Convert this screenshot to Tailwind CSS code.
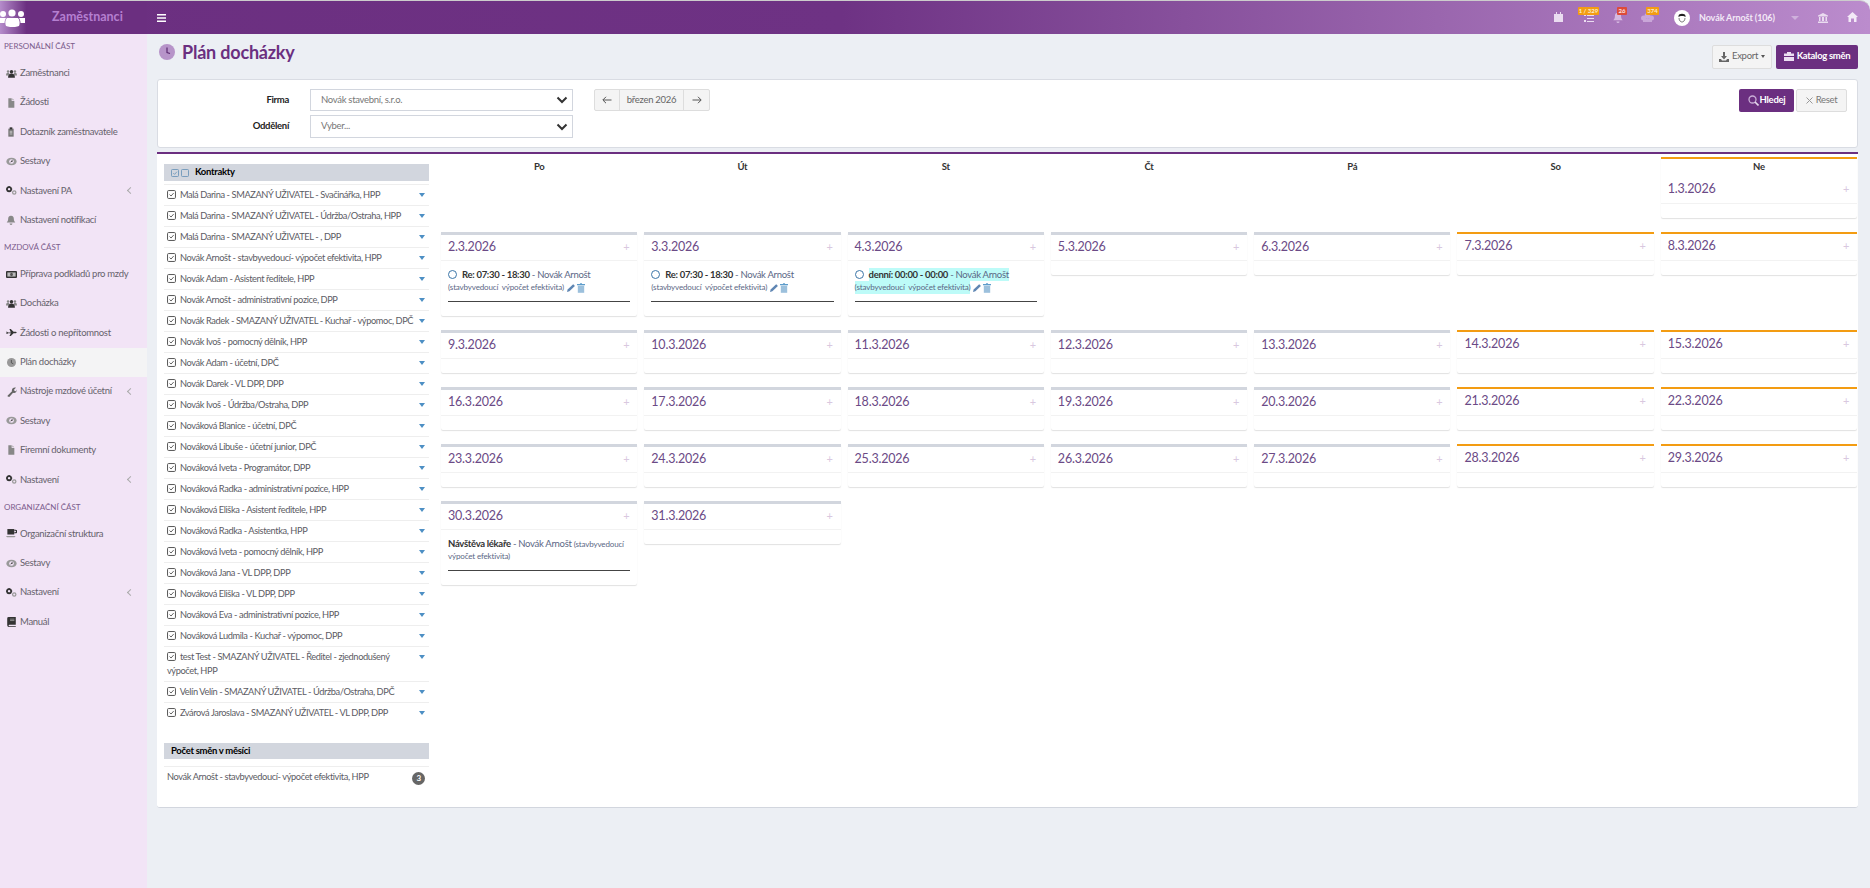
<!DOCTYPE html>
<html lang="cs">
<head>
  <meta charset="UTF-8">
  <title>Plán docházky</title>
  <script src="https://cdn.jsdelivr.net/npm/@tailwindcss/browser@4"></script>
</head>
<body class="h-screen overflow-hidden bg-[#eceff4] text-[9.5px] tracking-[-0.3px] text-[#5c5c64] font-['Lato','Liberation_Sans',sans-serif]">

<svg class="hidden">
  <symbol id="i-users" viewBox="0 0 16 12"><circle cx="3" cy="3" r="1.8" fill="#888"/><circle cx="13" cy="3" r="1.8" fill="#888"/><circle cx="8" cy="3.5" r="2.5" fill="#333"/><path d="M0 9c0-3 1-4 3-4s2 1 2 4zM11 9c0-3 1-4 2-4 2 0 3 1 3 4z" fill="#888"/><path d="M3 12c0-4 2-6 5-6s5 2 5 6z" fill="#333"/></symbol>
  <symbol id="i-file" viewBox="0 0 12 14"><path d="M2 0h5v4h4v10H2z" fill="#888"/><path d="M8 0l3 3H8z" fill="#aaa"/></symbol>
  <symbol id="i-clip" viewBox="0 0 12 14"><path d="M2 2h8v12H2z" fill="#777"/><path d="M4 0h4v3H4z" fill="#333"/><path d="M4 6h4M4 8h4M4 10h4" stroke="#ddd"/></symbol>
  <symbol id="i-eye" viewBox="0 0 16 12"><ellipse cx="8" cy="6" rx="7.5" ry="5.5" fill="#999"/><circle cx="8" cy="6" r="3.4" fill="#f2e4f6"/><path d="M6 7.5l3-4 1 2.5z" fill="#444"/></symbol>
  <symbol id="i-gears" viewBox="0 0 16 13"><circle cx="4.5" cy="4.5" r="3" fill="none" stroke="#333" stroke-width="2.4"/><path d="M4.5 0v2M4.5 7v2M0 4.5h2M7 4.5h2" stroke="#333" stroke-width="1.6"/><circle cx="12" cy="9.5" r="2.4" fill="none" stroke="#999" stroke-width="1.8"/></symbol>
  <symbol id="i-bell" viewBox="0 0 14 14"><path d="M7 1c3 0 4 2 4 5 0 2 1 3 2 4.500H1C2 9 3 8 3 6c0-3 1-5 4-5z" fill="#888"/><path d="M5 12h4a2 2 0 0 1-4 0z" fill="#888"/></symbol>
  <symbol id="i-money" viewBox="0 0 16 12"><rect x="0" y="1" width="16" height="10" rx="1.500" fill="#333"/><rect x="2" y="3" width="12" height="6" fill="#bbb"/><ellipse cx="8" cy="6" rx="2" ry="2.500" fill="#555"/></symbol>
  <symbol id="i-plane" viewBox="0 0 16 10"><path d="M0 4h1.500l1.500 1H7L5 0h2l4 4h3c2 0 2 2 0 2h-3l-4 4H5l2-4H3L1.500 7H.5l.5-1.500z" fill="#333"/></symbol>
  <symbol id="i-clock" viewBox="0 0 14 14"><circle cx="7" cy="7" r="7" fill="#999"/><path d="M6.800 3v4.500l3 1.500" stroke="#444" stroke-width="1.200" fill="none"/></symbol>
  <symbol id="i-wrench" viewBox="0 0 14 14"><path d="M1 12l6-6c-1-3 2-6 5.500-5L10 3.500l.5 2 2 .5L13.500 3.500C14 7 11 9.500 8.500 8l-5 5.500c-1 1-3.500-.5-2.500-1.500z" fill="#666"/></symbol>
  <symbol id="i-coffee" viewBox="0 0 16 13"><path d="M2 0h10v8H2z" fill="#333"/><path d="M12 1h2a2 2 0 0 1 0 5h-2V4.500h1.500a.7.7 0 0 0 0-2H12z" fill="#333"/><path d="M0 10h14l-1.500 2h-11z" fill="#999"/></symbol>
  <symbol id="i-book" viewBox="0 0 12 14"><path d="M2 0h10v11H3a1 1 0 0 0 0 2h9v1H2.500A2.500 2.500 0 0 1 0 11.500V2a2 2 0 0 1 2-2z" fill="#333"/><path d="M4 3h6M4 5h6" stroke="#aaa"/></symbol>
  <symbol id="i-check" viewBox="0 0 10 10"><rect x=".6" y=".6" width="8.800" height="8.800" rx="1.200" fill="none" stroke="#555" stroke-width="1.100"/><path d="M2.800 5l1.700 1.700 2.900-3.300" fill="none" stroke="#555" stroke-width="1"/></symbol>
  <symbol id="i-pencil" viewBox="0 0 10 10"><path d="M0 10l.8-3L7 .8a1 1 0 0 1 1.400 0l.8.8a1 1 0 0 1 0 1.400L3 9.200z" fill="#5f86b3"/></symbol>
  <symbol id="i-trash" viewBox="0 0 10 12"><path d="M0 1h3.500l.5-1h2l.5 1H10v1.500H0z" fill="#5d9ccb"/><path d="M1 3h8v9H1z" fill="#9cc0dc"/></symbol>
</svg>

<!-- top bar -->
<header class="h-[34px] border-t border-[#ccc] rounded-tr-[10px] flex items-center bg-linear-to-r from-[#6b2f80] via-[#6e3284] via-45% to-[#bb8ccd]">
  <div class="w-[147px] h-full flex items-center relative bg-linear-to-r from-[#b58ccb] to-[#6b2f80] to-[18%]">
    <svg class="w-[25px] h-[18px] ml-0" viewBox="0 0 25 18" fill="#fff"><circle cx="3" cy="5" r="3"/><circle cx="12" cy="4" r="3.600"/><circle cx="21" cy="5" r="3"/><path d="M0 9h6c-1 2-1.500 3-1.500 5H0zM25 9h-6c1 2 1.500 3 1.500 5H25zM7 9h11c2 2 2 6 1 8-3 1.500-10 1.500-13 0-1-2-1-6 1-8z"/></svg>
    <span class="ml-[27px] text-[12.5px] tracking-normal font-bold text-[#b57fd0]">Zaměstnanci</span>
  </div>
  <svg class="w-[9px] h-[8px] ml-[10px]" viewBox="0 0 9 8" fill="#fff"><path d="M0 0h9v1.500H0zM0 3.200h9v1.500H0zM0 6.500h9V8H0z"/></svg>
  <div class="ml-auto flex items-center h-full relative w-[320px]">
    <svg class="absolute left-[4px] top-[11px] w-[9px] h-[10px]" viewBox="0 0 9 10" fill="#eadcf0"><path d="M0 2h9v8H0zM2 0h1v2H2zM6 0h1v2H6z"/></svg>
    <svg class="absolute left-[34px] top-[13px] w-[10px] h-[8px]" viewBox="0 0 10 8" fill="#eadcf0"><path d="M3 1h7v1H3zM3 4h7v1H3zM3 7h7v1H3zM0 1h2v1H0zM0 6h2v2H0z"/></svg>
    <span class="absolute left-[28px] top-[6px] h-[8px] w-[21px] rounded-[1px] bg-[#f39c12] text-[#f8eccd] text-[6px] tracking-normal font-bold leading-[8px] text-center whitespace-nowrap">1 / 329</span>
    <svg class="absolute left-[62px] top-[11px] w-[12px] h-[11px]" viewBox="0 0 14 14" fill="#d5b9e0"><path d="M7 1c3 0 4 2 4 5 0 2 1 3 2 4.500H1C2 9 3 8 3 6c0-3 1-5 4-5zM5 12h4a2 2 0 0 1-4 0z"/></svg>
    <span class="absolute left-[67px] top-[6px] h-[8px] w-[10px] rounded-[1px] bg-[#dd4b39] text-[#fbe5e2] text-[6px] tracking-normal font-bold leading-[8px] text-center">26</span>
    <svg class="absolute left-[91px] top-[12px] w-[13px] h-[9px]" viewBox="0 0 13 9" fill="#c9a6d8"><circle cx="6.500" cy="3" r="3"/><circle cx="2.500" cy="5" r="2.500"/><circle cx="10.500" cy="5" r="2.500"/><path d="M2 6h9v3H2z"/></svg>
    <span class="absolute left-[96px] top-[6px] h-[8px] w-[13px] rounded-[1px] bg-[#f39c12] text-[#f8eccd] text-[6px] tracking-normal font-bold leading-[8px] text-center">374</span>
    <svg class="absolute left-[124px] top-[9px] w-[16px] h-[16px]" viewBox="0 0 16 16"><circle cx="8" cy="8" r="8" fill="#fff"/><path d="M4.500 6c0-3 7-3 7 0v1c-1-1.500-6-1.500-7 0z" fill="#222"/><path d="M5 8c0 3 2 4 3 4s3-1 3-4" fill="none" stroke="#444" stroke-width=".7"/></svg>
    <span class="absolute left-[149px] top-[10px] text-[9px] tracking-[-0.1px] font-bold text-[#f3e9f7] whitespace-nowrap">Novák Arnošt (106)</span>
    <span class="absolute left-[241px] top-[15px] w-0 h-0 border-x-[4px] border-x-transparent border-t-[4px] border-t-[#cfb0dc]"></span>
    <svg class="absolute left-[268px] top-[12px] w-[10px] h-[10px]" viewBox="0 0 10 10" fill="#eadcf0"><path d="M5 0l5 2.500v1H0v-1zM1 4h1.500v4H1zM4 4h2v4H4zM7.500 4H9v4H7.500zM0 8.500h10V10H0z"/></svg>
    <svg class="absolute left-[297px] top-[11px] w-[11px] h-[10px]" viewBox="0 0 11 10" fill="#f3e9f7"><path d="M5.500 0L11 5H9.500v5H7V6.500H4V10H1.500V5H0z"/></svg>
  </div>
</header>

<div class="flex h-[calc(100vh-34px)]">
  <!-- sidebar -->
  <aside class="w-[147px] shrink-0 bg-[#f2e4f6] text-[#66626c]">
    <div class="h-[24.5px] pl-[4px] flex items-center text-[8px] tracking-normal text-[#7b5c8c]">PERSONÁLNÍ ČÁST</div>
    <a class="h-[29.4px] flex items-center pl-[6px]"><svg class="w-[11px] h-[9px] mr-[3px]"><use href="#i-users"/></svg>Zaměstnanci</a>
    <a class="h-[29.4px] flex items-center pl-[6px]"><span class="w-[14px]"><svg class="w-[8px] h-[10px] ml-[1px]"><use href="#i-file"/></svg></span>Žádosti</a>
    <a class="h-[29.4px] flex items-center pl-[6px]"><span class="w-[14px]"><svg class="w-[8px] h-[10px] ml-[1px]"><use href="#i-clip"/></svg></span>Dotazník zaměstnavatele</a>
    <a class="h-[29.4px] flex items-center pl-[6px]"><svg class="w-[11px] h-[9px] mr-[3px]"><use href="#i-eye"/></svg>Sestavy</a>
    <a class="h-[29.4px] flex items-center pl-[6px] pr-[14px]"><svg class="w-[11px] h-[9px] mr-[3px]"><use href="#i-gears"/></svg>Nastavení PA<span class="ml-auto size-[5px] border-l border-b border-[#aaa] rotate-45"></span></a>
    <a class="h-[29.4px] flex items-center pl-[6px]"><span class="w-[14px]"><svg class="w-[10px] h-[10px]"><use href="#i-bell"/></svg></span>Nastavení notifikací</a>
    <div class="h-[24.5px] pl-[4px] flex items-center text-[8px] tracking-normal text-[#7b5c8c]">MZDOVÁ ČÁST</div>
    <a class="h-[29.4px] flex items-center pl-[6px]"><svg class="w-[11px] h-[9px] mr-[3px]"><use href="#i-money"/></svg>Příprava podkladů pro mzdy</a>
    <a class="h-[29.4px] flex items-center pl-[6px]"><svg class="w-[11px] h-[9px] mr-[3px]"><use href="#i-users"/></svg>Docházka</a>
    <a class="h-[29.4px] flex items-center pl-[6px]"><svg class="w-[11px] h-[7px] mr-[3px]"><use href="#i-plane"/></svg>Žádosti o nepřítomnost</a>
    <a class="h-[29.4px] flex items-center pl-[6px] bg-[#f4f4f5]"><span class="w-[14px]"><svg class="w-[9px] h-[9px] ml-[1px]"><use href="#i-clock"/></svg></span>Plán docházky</a>
    <a class="h-[29.4px] flex items-center pl-[6px] pr-[14px]"><span class="w-[14px]"><svg class="w-[10px] h-[10px] ml-[1px]"><use href="#i-wrench"/></svg></span>Nástroje mzdové účetní<span class="ml-auto size-[5px] border-l border-b border-[#aaa] rotate-45"></span></a>
    <a class="h-[29.4px] flex items-center pl-[6px]"><svg class="w-[11px] h-[9px] mr-[3px]"><use href="#i-eye"/></svg>Sestavy</a>
    <a class="h-[29.4px] flex items-center pl-[6px]"><span class="w-[14px]"><svg class="w-[8px] h-[10px] ml-[1px]"><use href="#i-file"/></svg></span>Firemní dokumenty</a>
    <a class="h-[29.4px] flex items-center pl-[6px] pr-[14px]"><svg class="w-[11px] h-[9px] mr-[3px]"><use href="#i-gears"/></svg>Nastavení<span class="ml-auto size-[5px] border-l border-b border-[#aaa] rotate-45"></span></a>
    <div class="h-[24.5px] pl-[4px] flex items-center text-[8px] tracking-normal text-[#7b5c8c]">ORGANIZAČNÍ ČÁST</div>
    <a class="h-[29.4px] flex items-center pl-[6px]"><svg class="w-[11px] h-[9px] mr-[3px]"><use href="#i-coffee"/></svg>Organizační struktura</a>
    <a class="h-[29.4px] flex items-center pl-[6px]"><svg class="w-[11px] h-[9px] mr-[3px]"><use href="#i-eye"/></svg>Sestavy</a>
    <a class="h-[29.4px] flex items-center pl-[6px] pr-[14px]"><svg class="w-[11px] h-[9px] mr-[3px]"><use href="#i-gears"/></svg>Nastavení<span class="ml-auto size-[5px] border-l border-b border-[#aaa] rotate-45"></span></a>
    <a class="h-[29.4px] flex items-center pl-[6px]"><span class="w-[14px]"><svg class="w-[9px] h-[10px] ml-[1px]"><use href="#i-book"/></svg></span>Manuál</a>
  </aside>

  <main class="w-[1723px] pl-[10px] pr-[12px]">
    <!-- page title -->
    <div class="h-[45px] flex items-center">
      <div class="flex items-center mb-[9px]">
        <svg class="w-[16px] h-[16px] ml-[2px] mr-[7px]" viewBox="0 0 16 16"><circle cx="8" cy="8" r="8" fill="#b794c9"/><path d="M8 3.500V8.500l3 1" stroke="#5b2a70" stroke-width="1.200" fill="none"/></svg>
        <h1 class="text-[18px] tracking-[-0.2px] font-bold text-[#6b2f80]">Plán docházky</h1>
      </div>
      <div class="ml-auto flex gap-[4px]">
        <button class="h-[24px] w-[60px] flex items-center justify-center gap-[3px] rounded-[2px] border border-[#ddd] bg-[#f4f4f4] text-[#666]">
          <svg class="w-[10px] h-[10px]" viewBox="0 0 10 10" fill="#666"><path d="M4 0h2v4h2L5 7.500 2 4h2zM0 7h2l1 1.500h4L8 7h2v3H0z"/></svg>Export<span class="w-0 h-0 border-x-[2.500px] border-x-transparent border-t-[3px] border-t-[#555]"></span>
        </button>
        <button class="h-[24px] w-[82px] flex items-center justify-center gap-[3px] rounded-[2px] bg-[#6b2f80] font-bold text-white">
          <svg class="w-[10px] h-[9px]" viewBox="0 0 10 9" fill="#ecdff2"><path d="M3 0h4v1.500h3V4H0V1.500h3zM0 5h10v4H0z"/></svg>Katalog směn
        </button>
      </div>
    </div>

    <!-- filters -->
    <section class="h-[69px] bg-white rounded-[3px] border border-[#d9dce3] flex pt-[9px] pl-[152px] pr-[10px]">
      <div class="w-[263px]">
        <div class="relative flex items-center h-[22px]">
          <label class="absolute -left-[71px] w-[50px] text-right font-bold text-[#222]">Firma</label>
          <div class="w-full h-full pl-[10px] flex items-center justify-between pr-[3px] border border-[#d2d6de] text-[#777]">Novák stavební, s.r.o.
            <svg class="w-[12px] h-[8px] mr-[1px]" viewBox="0 0 12 8"><path d="M1.500 1.500L6 6l4.500-4.500" fill="none" stroke="#333" stroke-width="2"/></svg></div>
        </div>
        <div class="relative flex items-center h-[23px] mt-[4px]">
          <label class="absolute -left-[71px] w-[50px] text-right font-bold text-[#222]">Oddělení</label>
          <div class="w-full h-full pl-[10px] flex items-center justify-between pr-[3px] border border-[#d2d6de] text-[#777]">Vyber...
            <svg class="w-[12px] h-[8px] mr-[1px]" viewBox="0 0 12 8"><path d="M1.500 1.500L6 6l4.500-4.500" fill="none" stroke="#333" stroke-width="2"/></svg></div>
        </div>
      </div>
      <div class="ml-[21px] h-[22px] flex text-[#666] bg-[#f4f4f4] border border-[#ddd] rounded-[2px]">
        <span class="w-[25px] flex items-center justify-center border-r border-[#ddd]"><svg class="w-[10px] h-[8px]" viewBox="0 0 10 8"><path d="M9.500 4H1M4 .8L.8 4 4 7.200" fill="none" stroke="#555"/></svg></span>
        <span class="w-[64px] flex items-center justify-center border-r border-[#ddd]">březen 2026</span>
        <span class="w-[25px] flex items-center justify-center"><svg class="w-[10px] h-[8px]" viewBox="0 0 10 8"><path d="M.5 4H9M6 .8L9.200 4 6 7.200" fill="none" stroke="#555"/></svg></span>
      </div>
      <div class="ml-auto flex gap-[2px] h-[23px]">
        <button class="w-[55px] rounded-[2px] bg-[#6b2f80] flex items-center justify-center gap-[1px] font-bold text-white">
          <svg class="w-[11px] h-[11px]" viewBox="0 0 11 11"><circle cx="4.500" cy="4.500" r="3.500" fill="none" stroke="#c9aed6" stroke-width="1.300"/><path d="M7 7l3.500 3.500" stroke="#e5d8ec" stroke-width="1.600"/></svg>Hledej
        </button>
        <button class="w-[51px] rounded-[2px] border border-[#ddd] bg-[#f4f4f4] flex items-center justify-center gap-[3px] text-[#777]"><svg class="w-[7px] h-[7px]" viewBox="0 0 7 7"><path d="M.5.5l6 6M6.500.5l-6 6" stroke="#999"/></svg>Reset</button>
      </div>
    </section>

    <!-- main panel -->
    <section class="mt-[4px] h-[656px] bg-white border-t-2 border-[#6b2f80] rounded-b-[3px] border-b border-b-[#d2d6de] flex pl-[7px]">
      <div class="w-[265px] shrink-0 pt-[10px]">
        <div class="h-[17px] bg-[#d2d6de] flex items-center pl-[7px] gap-[2px]">
          <svg class="w-[8px] h-[8px]" viewBox="0 0 10 10"><rect x=".6" y=".6" width="8.800" height="8.800" rx="1.200" fill="none" stroke="#6a94b8" stroke-width="1.100"/><path d="M2.800 5l1.700 1.700 2.900-3.300" fill="none" stroke="#6a94b8"/></svg>
          <svg class="w-[8px] h-[8px]" viewBox="0 0 10 10"><rect x=".6" y=".6" width="8.800" height="8.800" rx="1.200" fill="none" stroke="#6a94b8" stroke-width="1.100"/></svg>
          <b class="ml-[4px] text-black">Kontrakty</b>
        </div>
        <ul id="kontrakty" class="mt-[3px]"></ul>
        <div class="mt-[20px] h-[16px] bg-[#d2d6de] flex items-center pl-[7px]"><b class="text-black">Počet směn v měsíci</b></div>
        <div class="mt-[7px] h-[21px] border-t border-[#eee] flex items-center pl-[3px] pr-[4px] text-[9.25px] tracking-[-0.4px]">Novák Arnošt - stavbyvedoucí- výpočet efektivita, HPP
          <span class="ml-auto mt-[2px] size-[13px] rounded-full bg-[#666] text-white text-[8px] font-bold flex items-center justify-center">3</span>
        </div>
      </div>

      <div id="kalendar" class="ml-[12px] mt-[3px] w-[1416px] grid grid-cols-7 gap-x-[7px] gap-y-[14px] content-start items-start"></div>
    </section>
  </main>
</div>

<script>
const kontrakty = [
  "Malá Darina - SMAZANÝ UŽIVATEL - Svačinářka, HPP",
  "Malá Darina - SMAZANÝ UŽIVATEL - Údržba/Ostraha, HPP",
  "Malá Darina - SMAZANÝ UŽIVATEL - , DPP",
  "Novák Arnošt - stavbyvedoucí- výpočet efektivita, HPP",
  "Novák Adam - Asistent ředitele, HPP",
  "Novák Arnošt - administrativní pozice, DPP",
  "Novák Radek - SMAZANÝ UŽIVATEL - Kuchař - výpomoc, DPČ",
  "Novák Ivoš - pomocný dělník, HPP",
  "Novák Adam - účetní, DPČ",
  "Novák Darek - VL DPP, DPP",
  "Novák Ivoš - Údržba/Ostraha, DPP",
  "Nováková Blanice - účetní, DPČ",
  "Nováková Libuše - účetní junior, DPČ",
  "Nováková Iveta - Programátor, DPP",
  "Nováková Radka - administrativní pozice, HPP",
  "Nováková Eliška - Asistent ředitele, HPP",
  "Nováková Radka - Asistentka, HPP",
  "Nováková Iveta - pomocný dělník, HPP",
  "Nováková Jana - VL DPP, DPP",
  "Nováková Eliška - VL DPP, DPP",
  "Nováková Eva - administrativní pozice, HPP",
  "Nováková Ludmila - Kuchař - výpomoc, DPP",
  "test Test - SMAZANÝ UŽIVATEL - Ředitel - zjednodušený výpočet, HPP",
  "Velín Velín - SMAZANÝ UŽIVATEL - Údržba/Ostraha, DPČ",
  "Zvárová Jaroslava - SMAZANÝ UŽIVATEL - VL DPP, DPP"
];

document.getElementById("kontrakty").innerHTML = kontrakty.map(k => `
  <li class="relative min-h-[21px] border-t border-[#eee] pl-[3px] pr-[14px] py-[3px] leading-[14px] text-[9.25px] tracking-[-0.4px]">
    <svg class="inline-block w-[9px] h-[9px] mr-[2px] -mt-[2px]"><use href="#i-check"/></svg> ${k}
    <span class="absolute right-[4px] top-[8px] w-0 h-0 border-x-[3px] border-x-transparent border-t-[4px] border-t-[#4d8fc4]"></span>
  </li>`).join("");

const smena = (nazev, bg) => `
  <div class="mx-[7px] mt-[7px] pb-[7px] border-b border-[#444] leading-[13px] text-[#5b6785]">
    <div class="flex items-center h-[13px] whitespace-nowrap"><span class="size-[9px] rounded-full border border-[#3c76a8] mr-[5px]"></span><span class="${bg}"><b class="text-[#333]">${nazev}</b> <span>- Novák Arnošt</span></span></div>
    <div class="flex items-center h-[13px] whitespace-nowrap"><span class="text-[8px] tracking-[-0.15px] ${bg}">(stavbyvedoucí&nbsp; výpočet efektivita)</span><svg class="w-[8px] h-[8px] ml-[3px]"><use href="#i-pencil"/></svg><svg class="w-[8px] h-[10px] ml-[2px]"><use href="#i-trash"/></svg></div>
  </div>`;

const udalosti = {
  "2.3.2026": smena("Re: 07:30 - 18:30", ""),
  "3.3.2026": smena("Re: 07:30 - 18:30", ""),
  "4.3.2026": smena("denní: 00:00 - 00:00", "bg-[#bdfbf8]"),
  "30.3.2026": `<div class="mx-[7px] mt-[7px] pb-[7px] border-b border-[#444] leading-[13px] text-[#5b6785]">
    <div class="h-[13px] whitespace-nowrap"><b class="text-[#333]">Návštěva lékaře</b> - Novák Arnošt <span class="text-[8px] tracking-[-0.15px]">(stavbyvedoucí</span></div>
    <div class="h-[13px] text-[8px] tracking-[-0.15px]">výpočet efektivita)</div>
  </div>`
};

const dny = ["Po", "Út", "St", "Čt", "Pá", "So", "Ne"];

function bunka(den, sloupec) {
  const vikend = sloupec >= 5;
  const horni = vikend ? "border-t-2 border-[#f39c12]" : "border-t-[3px] border-[#d2d6de]";
  const vyska = vikend ? "h-[27px]" : "h-[26px]";
  const datum = den + ".3.2026";
  return `
  <div class="${horni} rounded-b-[2px] shadow-[0_1px_1px_rgba(0,0,0,0.12)] bg-white">
    <div class="${vyska} flex items-center justify-between pl-[7px] pr-[8px] pb-[1px] border-b border-[#f2f2f2]">
      <span class="text-[12.5px] tracking-[-0.2px] text-[#6b4a86]">${datum}</span><span class="text-[#d9c8df] text-[11px]">+</span>
    </div>
    <div class="pb-[14px]">${udalosti[datum] || ""}</div>
  </div>`;
}

let html = "";
dny.forEach((d, i) => {
  if (i === 6) {
    html += `<div class="border-t-2 border-[#f39c12] rounded-b-[2px] shadow-[0_1px_1px_rgba(0,0,0,0.12)] bg-white">
      <div class="h-[16px] flex items-center justify-center font-bold text-[#333]">${d}</div>
      <div class="h-[29px] flex items-center justify-between pl-[7px] pr-[8px] border-b border-[#f2f2f2]"><span class="text-[12.5px] tracking-[-0.2px] text-[#6b4a86]">1.3.2026</span><span class="text-[#d9c8df] text-[11px]">+</span></div>
      <div class="h-[14px]"></div></div>`;
  } else {
    html += `<div class="h-[61px] pt-[2px]"><div class="h-[16px] flex items-center justify-center font-bold text-[#333]">${d}</div></div>`;
  }
});
for (let den = 2; den <= 31; den++) html += bunka(den, (den + 5) % 7);
document.getElementById("kalendar").innerHTML = html;
</script>
</body>
</html>
